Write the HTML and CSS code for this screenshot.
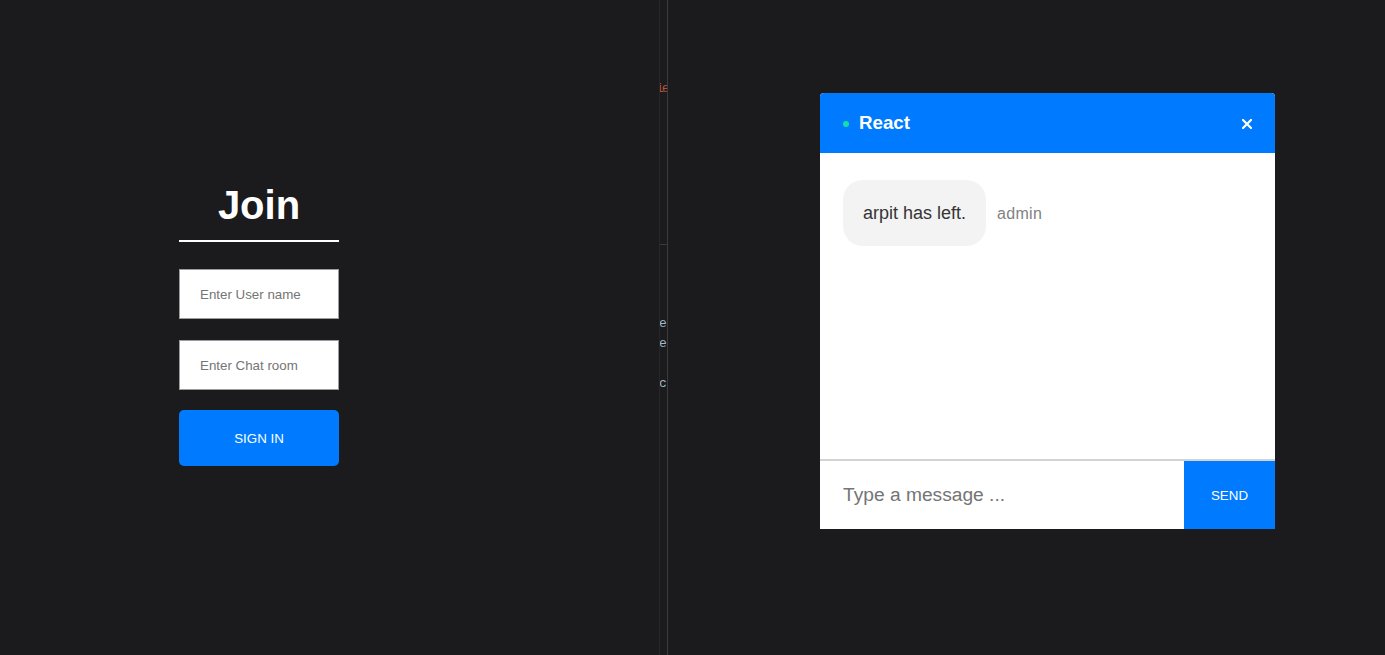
FILE: index.html
```html
<!DOCTYPE html>
<html lang="en">
<head>
<meta charset="utf-8">
<title>Chat</title>
<link rel="stylesheet" href="styles.css">
</head>
<body>
<div class="page">
  <section class="join-pane">
    <div class="join">
      <h1 class="heading">Join</h1>
      <input class="join-input" type="text" placeholder="Enter User name">
      <input class="join-input gap" type="text" placeholder="Enter Chat room">
      <button class="button gap-btn" type="button">Sign In</button>
    </div>
  </section>
  <div class="gutter">
    <pre class="ghost ghost-a">ie</pre>
    <div class="gutter-mark"></div>
    <pre class="ghost ghost-b">e
e

c</pre>
  </div>
  <section class="chat-pane">
    <div class="chat">
      <div class="info-bar">
        <div class="info-left">
          <span class="online-dot"></span>
          <h3 class="room">React</h3>
        </div>
        <svg class="close" width="10" height="10" viewBox="0 0 10 10" aria-label="close">
          <path d="M1 1 L9 9 M9 1 L1 9" stroke="#ffffff" stroke-width="2.2" stroke-linecap="square" fill="none"/>
        </svg>
      </div>
      <div class="messages">
        <div class="message-row">
          <div class="bubble">arpit has left.</div>
          <span class="sender">admin</span>
        </div>
      </div>
      <form class="form">
        <input class="msg-input" type="text" placeholder="Type a message ...">
        <button class="send" type="button">Send</button>
      </form>
    </div>
  </section>
</div>
</body>
</html>
```
FILE: styles.css
```css
html, body {
  margin: 0;
  padding: 0;
  height: 655px;
  overflow: hidden;
  background: #1b1b1d;
  font-family: "Liberation Sans", Arial, sans-serif;
}

.page {
  display: flex;
  height: 655px;
}

/* ---------- Join ---------- */
.join-pane {
  width: 659px;
  flex: none;
}

.join {
  width: 160px;
  margin-left: 179px;
  margin-top: 182px;
  display: flex;
  flex-direction: column;
}

.heading {
  margin: 0 0 27px 0;
  color: #ffffff;
  font-size: 40px;
  line-height: 46px;
  font-weight: bold;
  text-align: center;
  padding-bottom: 12px;
  border-bottom: 2px solid #ffffff;
}

.join-input {
  box-sizing: border-box;
  width: 160px;
  height: 50px;
  margin: 0;
  padding: 0 20px;
  border: 1px solid #9c9c9c;
  border-radius: 0;
  background: #ffffff;
  font-family: "Liberation Sans", Arial, sans-serif;
  font-size: 13.33px;
  color: #333;
  outline: none;
}

.join-input::placeholder {
  color: #757575;
}

.gap {
  margin-top: 21px;
}

.gap-btn {
  margin-top: 20px;
}

.button {
  box-sizing: border-box;
  width: 160px;
  height: 56px;
  border: none;
  border-radius: 5px;
  background: #007bff;
  color: #ffffff;
  text-transform: uppercase;
  font-family: "Liberation Sans", Arial, sans-serif;
  font-size: 13.33px;
  padding: 0;
}

/* ---------- Gutter ghost ---------- */
.gutter {
  flex: none;
  width: 7px;
  height: 655px;
  border-left: 1px solid #262628;
  border-right: 1px solid #3b3b3d;
  overflow: hidden;
  display: flex;
  flex-direction: column;
}

.ghost {
  margin: 0;
  font-family: "Liberation Mono", "DejaVu Sans Mono", monospace;
  font-size: 13px;
  line-height: 20px;
  white-space: pre;
}

.ghost-a {
  margin-top: 79px;
  margin-left: -4px;
  letter-spacing: -2px;
  color: #b0533c;
}

.gutter-mark {
  margin-top: 145px;
  height: 1px;
  background: #3a3a3c;
}

.ghost-b {
  margin-top: 69px;
  margin-left: -1px;
  color: #9db8cf;
}

/* ---------- Chat ---------- */
.chat-pane {
  flex: 1;
  padding-left: 152px;
  padding-top: 93px;
}

.chat {
  width: 455px;
  height: 436px;
  background: #ffffff;
  border-radius: 4px 4px 0 0;
  display: flex;
  flex-direction: column;
}

.info-bar {
  flex: none;
  height: 60px;
  background: #007bff;
  border-radius: 4px 4px 0 0;
  display: flex;
  align-items: center;
  justify-content: space-between;
  padding: 0 23px;
}

.info-left {
  display: flex;
  align-items: center;
}

.online-dot {
  width: 6px;
  height: 6px;
  border-radius: 50%;
  background: #13e0a9;
  margin-right: 10px;
  margin-top: 1px;
}

.room {
  margin: 0;
  color: #ffffff;
  font-size: 18.72px;
  font-weight: bold;
  line-height: 22px;
  margin-top: -1px;
}

.close {
  display: block;
  margin-top: 2px;
}

.messages {
  flex: 1;
  padding: 27px 23px 0 23px;
}

.message-row {
  display: flex;
  align-items: center;
}

.bubble {
  box-sizing: border-box;
  height: 66px;
  padding: 0 20px;
  display: flex;
  align-items: center;
  background: #f3f3f3;
  border-radius: 20px;
  color: #353535;
  font-size: 18px;
}

.sender {
  margin-left: 11px;
  margin-top: 1px;
  color: #828282;
  font-size: 16px;
  letter-spacing: 0.3px;
}

.form {
  flex: none;
  margin: 0;
  height: 70px;
  box-sizing: border-box;
  border-top: 2px solid #d3d3d3;
  display: flex;
}

.msg-input {
  flex: 1;
  min-width: 0;
  border: none;
  border-radius: 0;
  padding: 0 23px;
  margin: 0;
  font-family: "Liberation Sans", Arial, sans-serif;
  font-size: 19.2px;
  outline: none;
  background: #ffffff;
}

.msg-input::placeholder {
  color: #757575;
}

.send {
  width: 91px;
  flex: none;
  border: none;
  margin: 0;
  padding: 0;
  background: #007bff;
  color: #ffffff;
  text-transform: uppercase;
  font-family: "Liberation Sans", Arial, sans-serif;
  font-size: 13.33px;
}
```
